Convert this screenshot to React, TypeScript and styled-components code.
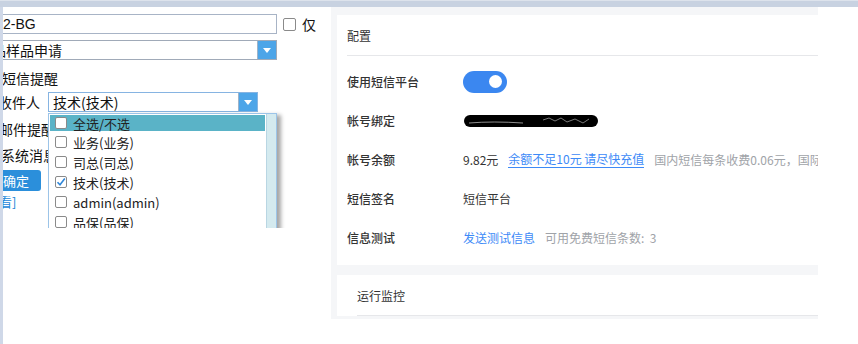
import * as React from 'react';
import styled, { createGlobalStyle } from 'styled-components';

const GlobalStyle = createGlobalStyle`
  html, body {
    margin: 0;
    padding: 0;
    background: #fff;
  }
  body {
    font-family: "Noto Sans CJK SC", "Noto Sans", sans-serif;
    color: #333;
  }
`;

const Page = styled.div`
  width: 858px;
  height: 344px;
  overflow: hidden;
  display: flex;
  flex-direction: column;
`;

const TopBar = styled.div`
  height: 7px;
  flex: none;
  background: #c8d2e1;
  border-top: 1px solid #dde3ec;
  box-sizing: border-box;
`;

const Body = styled.div`
  display: flex;
  flex: 1;
  align-items: flex-start;
`;

const Strip = styled.div`
  width: 3px;
  height: 337px;
  background: #cfd8e8;
  flex: none;
`;

/* legacy form, shown in a clipped frame */
const LegacyFrame = styled.div`
  position: relative;
  width: 328px;
  height: 221px;
  overflow: hidden;
  flex: none;
  font-family: "Noto Sans CJK SC", "Microsoft YaHei", sans-serif;
  font-size: 13px;
  color: #111;
`;

const LegacyForm = styled.div`
  display: flex;
  flex-direction: column;
  margin-left: -12px;
  padding-top: 7px;
`;

const FieldRow = styled.div<{ $h?: number; $indent?: number; $top?: number }>`
  display: flex;
  align-items: center;
  height: ${(p) => p.$h ?? 20}px;
  padding-left: ${(p) => p.$indent ?? 0}px;
  margin-top: ${(p) => p.$top ?? 0}px;
  gap: 6px;
`;

const TextInput = styled.div`
  width: 286px;
  height: 20px;
  box-sizing: border-box;
  border: 1px solid #a8b4c6;
  padding-left: 11px;
  display: flex;
  align-items: center;
  font-size: 14px;
  font-family: "Liberation Sans", "Noto Sans CJK SC", sans-serif;
`;

const SelectBox = styled.div<{ $w: number; $border: string }>`
  width: ${(p) => p.$w}px;
  height: 20px;
  box-sizing: border-box;
  border: 1px solid ${(p) => p.$border};
  display: flex;
  align-items: stretch;
  font-size: 14px;
`;

const SelectText = styled.div<{ $pad: number }>`
  flex: 1;
  display: flex;
  align-items: center;
  white-space: nowrap;
  padding-left: ${(p) => p.$pad}px;
`;

const SelectButton = styled.div`
  width: 18px;
  flex: none;
  background: #4da5e8;
  border-left: 1px solid #9fb3c8;
  display: flex;
  align-items: center;
  justify-content: center;
`;

const Caret = styled.span`
  width: 0;
  height: 0;
  border-left: 4px solid transparent;
  border-right: 4px solid transparent;
  border-top: 5px solid #fff;
  margin-top: 1px;
`;

const Box = styled.span<{ $size?: number }>`
  width: ${(p) => p.$size ?? 12}px;
  height: ${(p) => p.$size ?? 12}px;
  box-sizing: border-box;
  border: 1px solid #8a8a8a;
  border-radius: 2px;
  background: #fff;
  flex: none;
  display: inline-flex;
  align-items: center;
  justify-content: center;
`;

const PlainText = styled.span`
  font-size: 14px;
  white-space: nowrap;
`;

const Label = styled.span`
  width: 44px;
  padding-left: 7px;
  font-size: 14px;
  white-space: nowrap;
`;

const OkButton = styled.div`
  width: 50px;
  height: 21px;
  background: #2b8fdb;
  color: #fff;
  border-radius: 3px;
  display: flex;
  align-items: center;
  justify-content: center;
  font-size: 13px;
`;

const BackLink = styled.span`
  color: #2286d8;
  font-size: 13px;
  padding-left: 8px;
`;

const DropList = styled.div`
  position: absolute;
  left: 45px;
  top: 106px;
  width: 229px;
  height: 130px;
  box-sizing: border-box;
  border: 1px solid #9cc4e8;
  background: #fff;
  display: flex;
  box-shadow: 4px 2px 4px rgba(0, 0, 0, 0.35);
`;

const DropItems = styled.div`
  flex: 1;
  display: flex;
  flex-direction: column;
  padding: 1px 1px 0;
`;

const DropTrack = styled.div`
  width: 9px;
  background: #d4eaef;
  border-left: 1px solid #b9d6e3;
`;

const DropItem = styled.div<{ $active?: boolean; $h: number }>`
  height: ${(p) => p.$h}px;
  display: flex;
  align-items: center;
  gap: 6px;
  padding-left: 5px;
  background: ${(p) => (p.$active ? '#5ab3c7' : 'transparent')};
  margin-bottom: ${(p) => (p.$active ? 1 : 0)}px;
  font-size: 13px;
  color: #222;
  white-space: nowrap;
`;

/* settings panel */
const SettingsArea = styled.div`
  width: 481px;
  height: 304px;
  background: #f5f6f8;
  padding: 8px 0 0 6px;
  box-sizing: content-box;
  overflow: hidden;
  display: flex;
  flex-direction: column;
  gap: 10px;
  flex: none;
`;

const Card = styled.div<{ $inset: number }>`
  background: #fff;
  padding-left: ${(p) => p.$inset}px;
  flex: none;
`;

const CardHeader = styled.div`
  height: 40px;
  border-bottom: 1px solid #e6e7ea;
  display: flex;
  align-items: center;
  font-size: 12px;
  color: #333;
`;

const Rows = styled.div`
  padding: 6px 0 8px;
`;

const Row = styled.div`
  height: 39px;
  display: flex;
  align-items: center;
  font-size: 12px;
  white-space: nowrap;
  overflow: hidden;
`;

const RowLabel = styled.div`
  width: 116px;
  flex: none;
  color: #333;
  font-weight: 500;
`;

const Value = styled.span<{ $tone?: 'main' | 'muted' | 'link' }>`
  color: ${(p) => (p.$tone === 'muted' ? '#a0a3a8' : p.$tone === 'link' ? '#3d8af7' : '#333')};
  margin-right: 10px;
`;

const Underlined = styled(Value)`
  border-bottom: 1px solid #3d8af7;
  line-height: 16px;
`;

const Toggle = styled.div`
  width: 44px;
  height: 22px;
  border-radius: 11px;
  background: #3b87f0;
  display: flex;
  align-items: center;
  justify-content: flex-end;
  padding-right: 5px;
  box-sizing: border-box;
`;

const Knob = styled.span`
  width: 13px;
  height: 13px;
  border-radius: 50%;
  background: #fff;
`;

const Redacted = () => (
  <svg width="136" height="14" viewBox="0 0 136 14">
    <rect x="1" y="1" width="134" height="12" rx="6" fill="#000" />
    <path d="M6 9 Q 30 7 60 9" stroke="#fff" strokeWidth="0.8" fill="none" opacity="0.7" />
    <path d="M80 6 L86 4 L92 7 L98 4 L104 8 L112 5 L120 9 L126 5" stroke="#fff" strokeWidth="0.8" fill="none" opacity="0.6" />
  </svg>
);

const Check = () => (
  <svg width="10" height="10" viewBox="0 0 10 10">
    <path d="M1.5 5.2 L4 7.8 L8.8 1.6" stroke="#2f86d8" strokeWidth="1.6" fill="none" />
  </svg>
);

const recipients = [
  { name: '业务(业务)', checked: false },
  { name: '司总(司总)', checked: false },
  { name: '技术(技术)', checked: true },
  { name: 'admin(admin)', checked: false },
  { name: '品保(品保)', checked: false },
];

export default function App() {
  return (
    <>
      <GlobalStyle />
      <Page>
        <TopBar />
        <Body>
          <Strip />
          <LegacyFrame>
            <LegacyForm>
              <FieldRow>
                <TextInput>2-BG</TextInput>
                <Box $size={13} />
                <PlainText>仅</PlainText>
              </FieldRow>
              <FieldRow $top={6}>
                <SelectBox $w={286} $border="#a0aab8">
                  <SelectText $pad={-4}>品样品申请</SelectText>
                  <SelectButton>
                    <Caret />
                  </SelectButton>
                </SelectBox>
              </FieldRow>
              <FieldRow $h={24} $top={6} $indent={11}>
                <PlainText>短信提醒</PlainText>
              </FieldRow>
              <FieldRow $h={24}>
                <Label>收件人</Label>
                <SelectBox $w={210} $border="#86b4e2">
                  <SelectText $pad={4}>技术(技术)</SelectText>
                  <SelectButton>
                    <Caret />
                  </SelectButton>
                </SelectBox>
              </FieldRow>
              <FieldRow $h={26} $top={2} $indent={8}>
                <PlainText>邮件提醒</PlainText>
              </FieldRow>
              <FieldRow $h={26} $indent={10}>
                <PlainText>系统消息</PlainText>
              </FieldRow>
              <FieldRow $h={21} $top={2}>
                <OkButton>确定</OkButton>
              </FieldRow>
              <FieldRow $h={20}>
                <BackLink>看]</BackLink>
              </FieldRow>
            </LegacyForm>
            <DropList>
              <DropItems>
                <DropItem $active $h={16}>
                  <Box />
                  全选/不选
                </DropItem>
                {recipients.map((r) => (
                  <DropItem key={r.name} $h={20}>
                    <Box>{r.checked && <Check />}</Box>
                    {r.name}
                  </DropItem>
                ))}
              </DropItems>
              <DropTrack />
            </DropList>
          </LegacyFrame>
          <SettingsArea>
            <Card $inset={10}>
              <CardHeader>配置</CardHeader>
              <Rows>
                <Row>
                  <RowLabel>使用短信平台</RowLabel>
                  <Toggle>
                    <Knob />
                  </Toggle>
                </Row>
                <Row>
                  <RowLabel>帐号绑定</RowLabel>
                  <Redacted />
                </Row>
                <Row>
                  <RowLabel>帐号余额</RowLabel>
                  <Value>9.82元</Value>
                  <Underlined $tone="link">余额不足10元 请尽快充值</Underlined>
                  <Value $tone="muted">国内短信每条收费0.06元，国际短信每条收费0.5元</Value>
                </Row>
                <Row>
                  <RowLabel>短信签名</RowLabel>
                  <Value>短信平台</Value>
                </Row>
                <Row>
                  <RowLabel>信息测试</RowLabel>
                  <Value $tone="link">发送测试信息</Value>
                  <Value $tone="muted">可用免费短信条数:&nbsp;&nbsp;3</Value>
                </Row>
              </Rows>
            </Card>
            <Card $inset={20}>
              <CardHeader>运行监控</CardHeader>
            </Card>
          </SettingsArea>
        </Body>
      </Page>
    </>
  );
}
